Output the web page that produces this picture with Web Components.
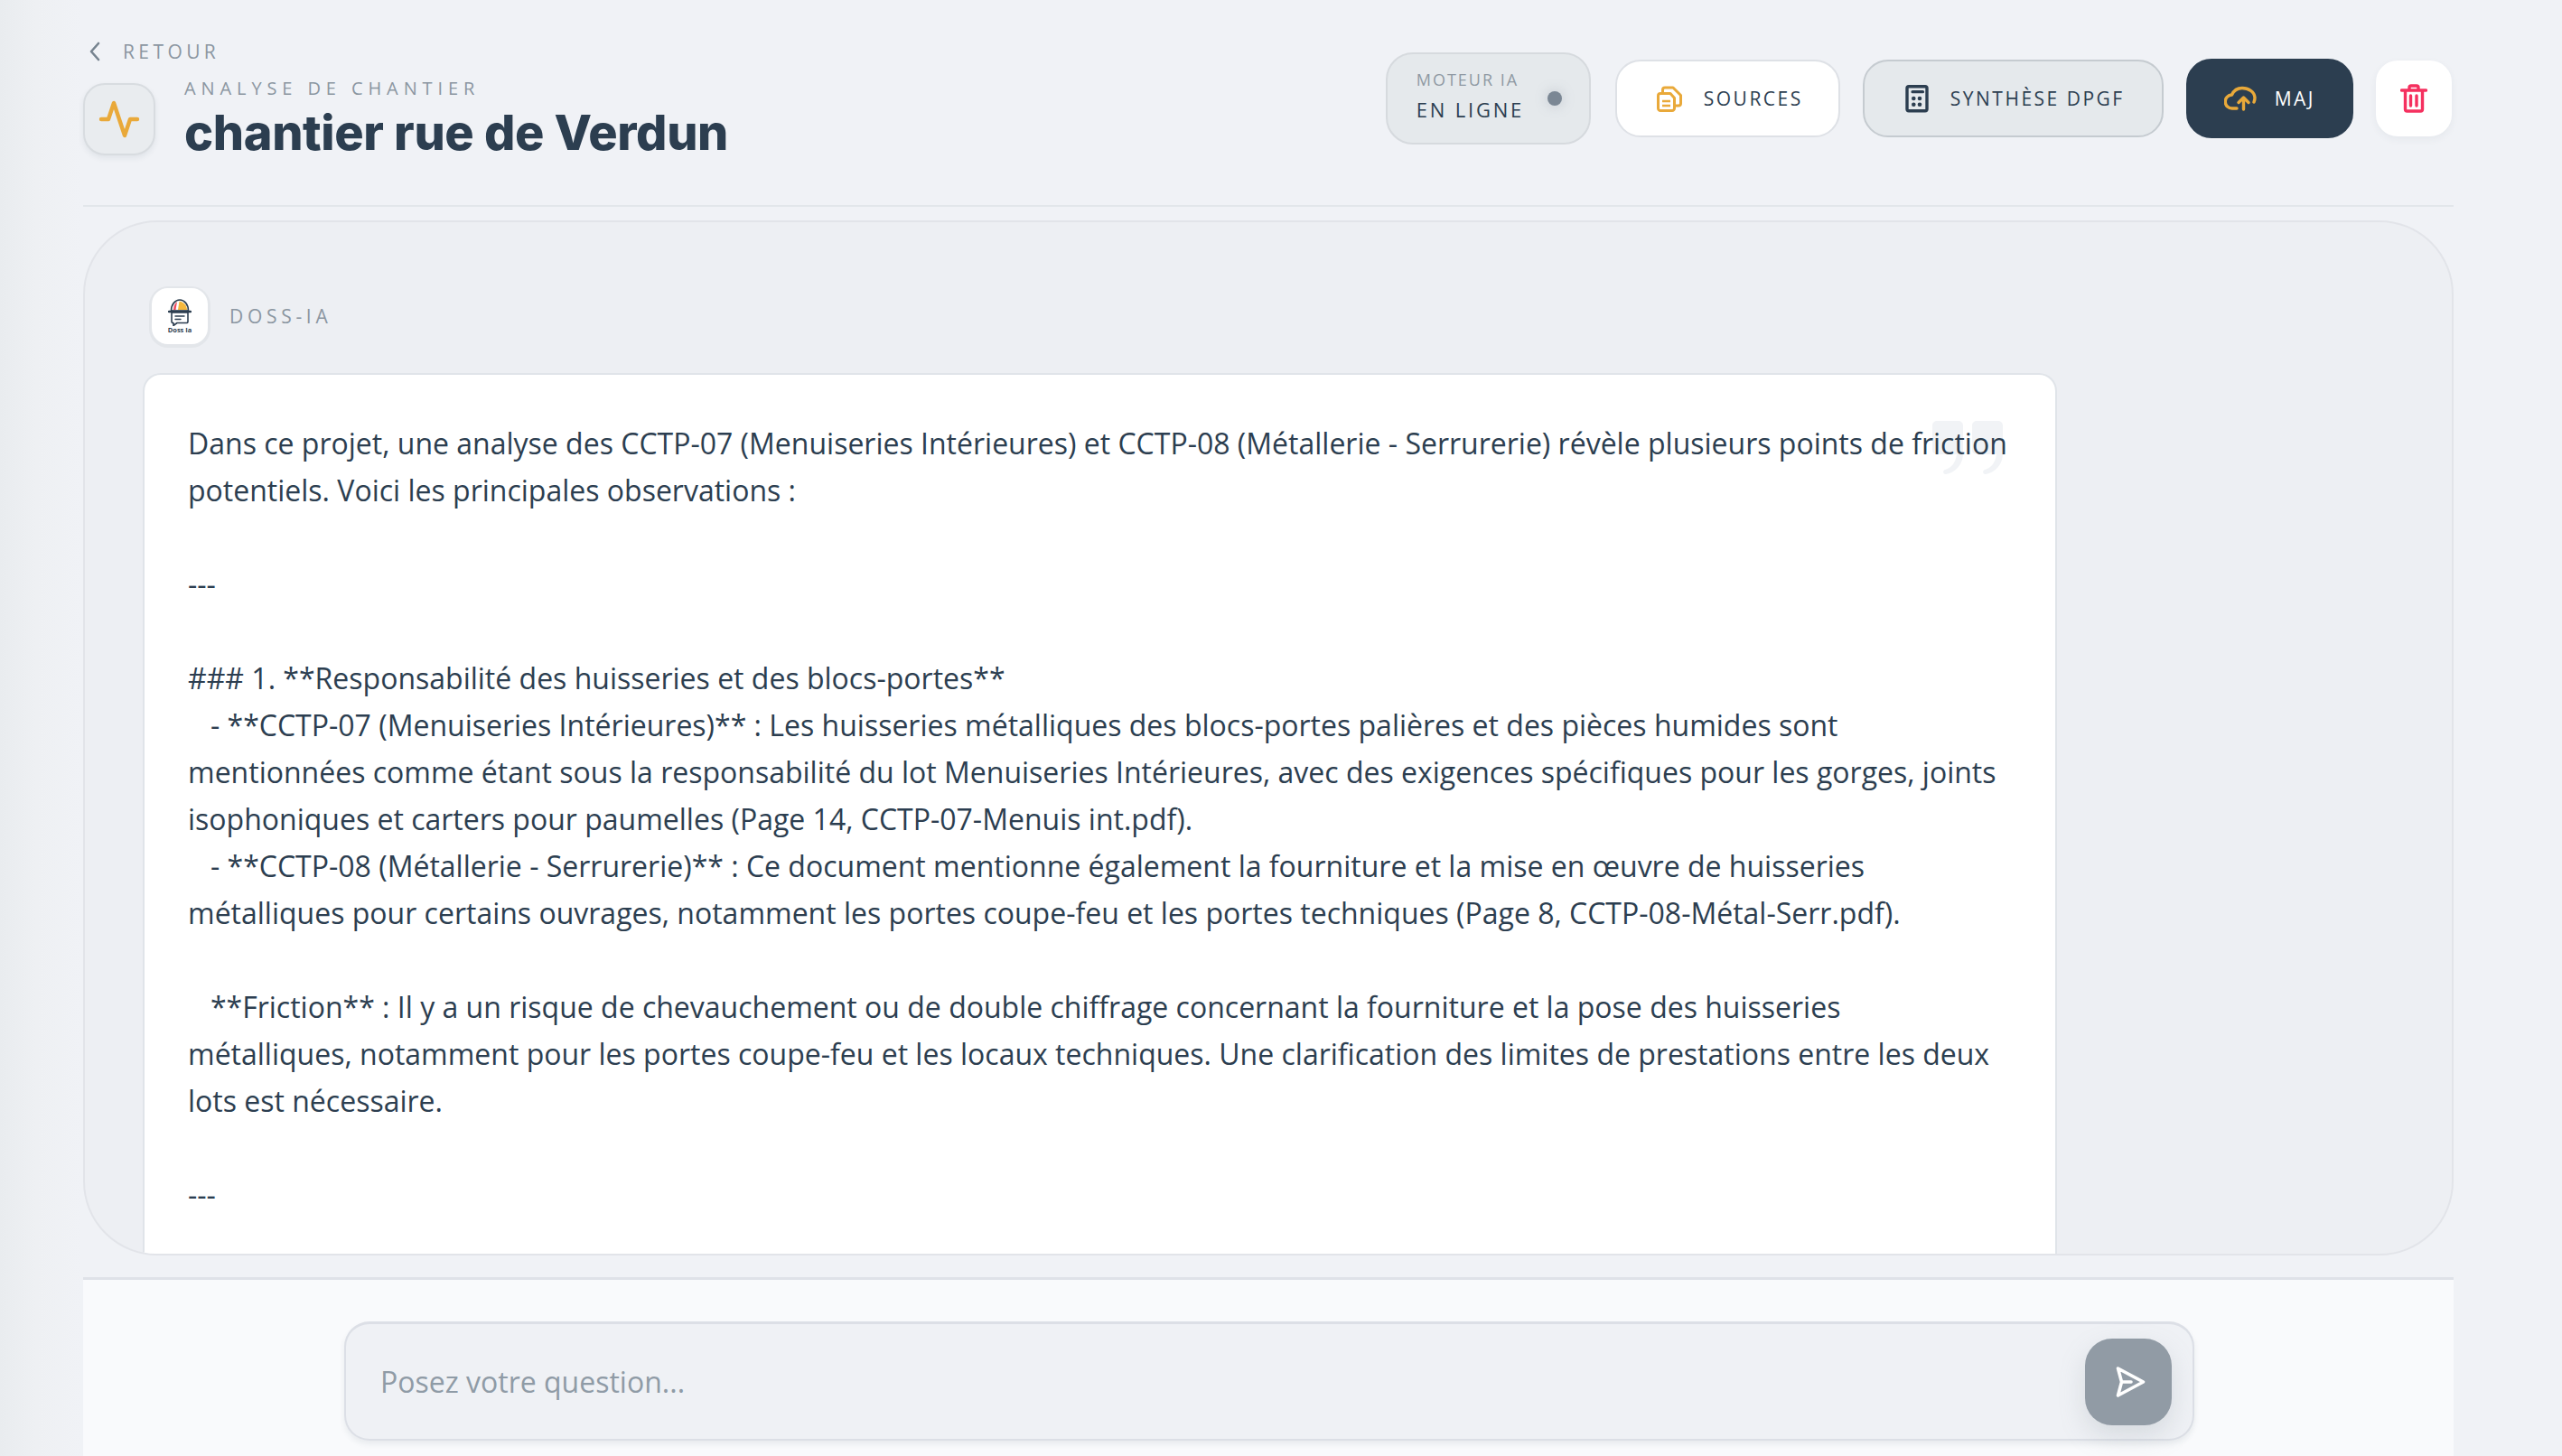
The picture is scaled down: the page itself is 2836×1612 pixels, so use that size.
<!DOCTYPE html>
<html lang="fr"><head><meta charset="utf-8"><title>chantier rue de Verdun</title>
<style>
html,body{margin:0;height:100%;overflow:hidden}
body{font-family:"Open Sans","Liberation Sans",sans-serif;color:#2c3e50;background:linear-gradient(90deg,#e9ecef 0,#eef0f3 40px,#f0f2f6 90px)}
</style></head><body>
<template id="t-app"><style>
:host{display:flex;flex-direction:column;box-sizing:border-box;height:1612px;padding:0 120px 0 92px}
</style><slot></slot></template>

<template id="t-header"><style>
:host{display:flex;justify-content:space-between;align-items:center;box-sizing:border-box;height:229px;padding:47px 2px 54px 0;border-bottom:2px solid #e2e6ea;flex:none}
.left{display:flex;flex-direction:column;gap:24px}
.back{display:flex;align-items:center;gap:24px;padding-left:6px;font-size:21px;font-weight:500;letter-spacing:4.4px;color:#8b96a1;height:22px;line-height:22px}
.row{display:flex;gap:32px;align-items:flex-start}
.ico{box-sizing:border-box;width:80px;height:80px;border-radius:24px;background:#e9ecef;border:2px solid #d8dce0;box-shadow:0 3px 6px rgba(44,62,80,.08);display:flex;align-items:center;justify-content:center}
.eyebrow{font-size:20px;font-weight:500;letter-spacing:5.9px;color:#8b96a1;line-height:12px}
h1{margin:15px 0 0;font:800 54px/56px Inter,sans-serif;letter-spacing:-.36px;color:#2c3e50}
.actions{display:flex;align-items:center;gap:25px;margin-bottom:2px}
</style>
<div class="left"><div class="back"><svg width="14" height="22" viewBox="0 0 14 22" fill="none" stroke="#76838f" stroke-width="2.6" stroke-linecap="round" stroke-linejoin="round"><path d="M11 2 3 11l8 9"/></svg><span><slot name="back"></slot></span></div>
<div class="row"><div class="ico"><slot name="icon"></slot></div><div><div class="eyebrow"><slot name="eyebrow"></slot></div><h1><slot name="title"></slot></h1></div></div></div>
<div class="actions"><slot></slot></div></template>

<template id="t-status"><style>
:host{display:flex;align-items:center;box-sizing:border-box;width:227px;height:102px;padding:0 30px 0 32px;justify-content:space-between;background:#e5e9ec;border:2px solid #d6dade;border-radius:30px;margin-right:2px}
.txt{margin-top:-6px}
.a{font-size:18px;line-height:24px;letter-spacing:2px;color:#8f99a3;font-weight:500}
.b{font-size:22px;line-height:30px;letter-spacing:2.8px;color:#2c3e50;font-weight:500;margin-top:6px;white-space:nowrap}
.dot{width:16px;height:16px;border-radius:50%;background:#7b8794;box-shadow:0 0 14px rgba(123,135,148,.35)}
</style><div class="txt"><div class="a"><slot name="label"></slot></div><div class="b"><slot name="value"></slot></div></div><div class="dot"></div></template>

<template id="t-btn"><style>
:host{display:flex;align-items:center;box-sizing:border-box;height:86px;border-radius:28px;border:2px solid #dee1e6;background:#fff;font-size:21px;font-weight:500;letter-spacing:2.5px;color:#2c3e50;white-space:nowrap;gap:24px;padding:0 39px 0 44px}
:host([variant=soft]){background:#e5e9ec;border-color:#c5cbd0;gap:24px;padding:0 41px 0 45px}
:host([variant=dark]){background:#2c3e50;border-color:#2c3e50;color:#fff;height:88px;gap:20px;padding:0 40px}
:host([variant=icon]){width:84px;height:84px;padding:0;justify-content:center;border-color:#fff;border-radius:24px;box-shadow:0 3px 8px rgba(44,62,80,.06)}
::slotted(svg){display:block;flex:none}
</style><slot></slot></template>

<template id="t-thread"><style>
:host{display:flex;flex-direction:column;box-sizing:border-box;margin-top:15px;height:1146px;flex:none;overflow:hidden;border:2px solid #e2e4e9;border-radius:82px;background:#edeff3;padding:73px 0 0 64px}
.who{display:flex;align-items:center;gap:24px;margin:0 0 32px 10px;flex:none;font-size:21px;font-weight:500;letter-spacing:4.7px;color:#8b96a1;line-height:62px;height:62px}
.av{box-sizing:border-box;width:62px;height:62px;border-radius:18px;background:#fff;border:2px solid #fff;box-shadow:0 1px 0 3px #e3e6ea;display:flex;flex-direction:column;align-items:center;justify-content:center}
.cap{font:700 7.5px/8px "Open Sans",sans-serif;letter-spacing:0;color:#2c3e50}
</style><div class="who"><div class="av"><slot name="avatar"></slot><div class="cap"><slot name="cap"></slot></div></div><slot name="name"></slot></div><slot></slot></template>

<template id="t-bubble"><style>
:host{display:block;position:relative;box-sizing:border-box;width:2119px;flex:1 0 auto;background:#fff;border:2px solid #e0e4e9;border-bottom:0;border-radius:20px 20px 0 0;padding:50px 48px 0;font-size:32px;line-height:52px;color:#2c3e50;white-space:pre-wrap}
.q{position:absolute;left:1979px;top:51px;width:80px;height:60px}
.t{position:relative}
</style><svg class="q" viewBox="0 0 80 60" fill="#f1f3f6"><path d="M0 5a5 5 0 0 1 5-5h24a5 5 0 0 1 5 5v31c0 12-8 21-19 23-3 .5-4-4-1-5 8-2 12-9 13-17H5a5 5 0 0 1-5-5z"/><path d="M44 5a5 5 0 0 1 5-5h24a5 5 0 0 1 5 5v31c0 12-8 21-19 23-3 .5-4-4-1-5 8-2 12-9 13-17H49a5 5 0 0 1-5-5z"/></svg><div class="t"><slot></slot></div></template>

<template id="t-composer"><style>
:host{display:block;box-sizing:border-box;margin-top:24px;flex:1;background:#f9fafc;border-top:3px solid #dfe2e8;padding:46px 0 0 289px}
.box{box-sizing:border-box;width:2048px;height:132px;display:flex;align-items:center;justify-content:space-between;padding:0 23px 0 38px;background:#eff1f5;border:2px solid #dcdfe6;border-top-width:3px;border-radius:28px;box-shadow:0 4px 6px rgba(44,62,80,.08);font-size:32px;color:#8f9ba6}
.send{width:96px;height:96px;border-radius:30px;background:#919ba5;box-shadow:0 12px 28px rgba(145,155,165,.25);display:flex;align-items:center;justify-content:center}
</style><div class="box"><slot></slot><div class="send"><svg width="44" height="44" viewBox="0 0 44 44" fill="none" stroke="#fff" stroke-width="3.6" stroke-linecap="round" stroke-linejoin="round"><path d="M10.5 7 38.5 22 10.5 37 14.5 22zM14.5 22H25"/></svg></div></div></template>

<app-shell>
<page-header>
<span slot="back">RETOUR</span>
<svg slot="icon" width="48" height="48" viewBox="0 0 24 24" fill="none" stroke="#e9a93a" stroke-width="2.2" stroke-linecap="round" stroke-linejoin="round"><path d="M22 12h-4l-3 9L9 3l-3 9H2"/></svg>
<span slot="eyebrow">ANALYSE DE CHANTIER</span>
<span slot="title">chantier rue de Verdun</span>
<status-pill><span slot="label">MOTEUR IA</span><span slot="value">EN LIGNE</span></status-pill>
<action-btn><svg width="28" height="29" viewBox="14 13 28 29" fill="none" stroke="#e9a93a" stroke-width="3" stroke-linecap="round" stroke-linejoin="round"><path d="M18 21.5h11l4.5 5v11.5a2.5 2.5 0 0 1-2.5 2.5h-13a2.5 2.5 0 0 1-2.5-2.5v-14a2.5 2.5 0 0 1 2.5-2.5z"/><path d="M20.5 20v-2.5a2.5 2.5 0 0 1 2.5-2.5h9l8.5 8.5v9a2.5 2.5 0 0 1-2.5 2.5h-3"/><path d="M20 30h9M20 35h9" stroke-width="2.6" stroke-linecap="butt"/></svg>SOURCES</action-btn>
<action-btn variant="soft"><svg width="26" height="31" viewBox="9 14 26 31" fill="none" stroke="#2c3e50" stroke-linecap="round" stroke-linejoin="round"><rect x="11" y="15.7" width="22" height="27" rx="2" stroke-width="3.4"/><path d="M17 21.7h11.5" stroke-width="3.2"/><g fill="#2c3e50" stroke="none"><circle cx="18.3" cy="29" r="2.3"/><circle cx="25" cy="29" r="2.3"/><circle cx="18.3" cy="35.7" r="2.3"/><circle cx="25" cy="35.7" r="2.3"/></g></svg>SYNTHÈSE DPGF</action-btn>
<action-btn variant="dark"><svg width="36" height="28" viewBox="11 15 36 28" fill="none" stroke="#e9a93a" stroke-width="3.4" stroke-linecap="round" stroke-linejoin="round"><path d="M25 40H20a7.5 7.5 0 0 1-.5-15C22 19.500 27 17.500 31 17.500c7 0 13.500 4 14 10.500 0 2 0 3-1 5"/><path d="M32.500 41V28.500M27 33.500l5.500-5.500 5.500 5.500"/></svg>MAJ</action-btn>
<action-btn variant="icon"><svg width="30" height="32" viewBox="17 12 30 32" fill="none" stroke="#f5305f" stroke-width="3.4" stroke-linecap="round" stroke-linejoin="round"><path d="M18.500 19h27M22.500 19v21a2 2 0 0 0 2 2h15a2 2 0 0 0 2-2V19M27 19v-3a2 2 0 0 1 2-2h6a2 2 0 0 1 2 2v3M28.500 25v11M35 25v11"/></svg></action-btn>
</page-header>
<chat-thread>
<svg slot="avatar" width="26" height="30" viewBox="0 0 26 30" fill="none" stroke-linejoin="round" stroke-linecap="round"><path d="M3.500 13C3.500 6 8 1 13 1s9.500 5 9.500 12z" fill="#fff" stroke="#2c3e50" stroke-width="1.600"/><path d="M11 12 12.500 2.500C18 3 21 8 21 12z" fill="#f5b83d"/><path d="M6 12C6 8 8 4.500 10 3L8.500 12z" fill="#ef4c60"/><path d="M1 14h24" stroke="#2c3e50" stroke-width="2.400"/><path d="M4 15h18v10a1.500 1.500 0 0 1-1.500 1.500H10L6 29.500v-3H5.500A1.500 1.500 0 0 1 4 25z" fill="#fff" stroke="#2c3e50" stroke-width="1.600"/><path d="M8 19h10M8 22.500h6" stroke="#2c3e50" stroke-width="1.400"/></svg>
<span slot="cap">Doss Ia</span>
<span slot="name">DOSS-IA</span>
<chat-bubble>Dans ce projet, une analyse des CCTP-07 (Menuiseries Intérieures) et CCTP-08 (Métallerie - Serrurerie) révèle plusieurs points de friction potentiels. Voici les principales observations :

---

### 1. **Responsabilité des huisseries et des blocs-portes**
   - **CCTP-07 (Menuiseries Intérieures)** : Les huisseries métalliques des blocs-portes palières et des pièces humides sont mentionnées comme étant sous la responsabilité du lot Menuiseries Intérieures, avec des exigences spécifiques pour les gorges, joints isophoniques et carters pour paumelles (Page 14, CCTP-07-Menuis int.pdf).
   - **CCTP-08 (Métallerie - Serrurerie)** : Ce document mentionne également la fourniture et la mise en œuvre de huisseries métalliques pour certains ouvrages, notamment les portes coupe-feu et les portes techniques (Page 8, CCTP-08-Métal-Serr.pdf).

   **Friction** : Il y a un risque de chevauchement ou de double chiffrage concernant la fourniture et la pose des huisseries métalliques, notamment pour les portes coupe-feu et les locaux techniques. Une clarification des limites de prestations entre les deux lots est nécessaire.

---</chat-bubble>
</chat-thread>
<chat-composer>Posez votre question...</chat-composer>
</app-shell>
<script>
const reg=(n,t)=>customElements.define(n,class extends HTMLElement{constructor(){super();this.attachShadow({mode:'open'}).appendChild(document.getElementById(t).content.cloneNode(true))}});
reg('app-shell','t-app');reg('page-header','t-header');reg('status-pill','t-status');reg('action-btn','t-btn');reg('chat-thread','t-thread');reg('chat-bubble','t-bubble');reg('chat-composer','t-composer');
</script>
</body></html>
